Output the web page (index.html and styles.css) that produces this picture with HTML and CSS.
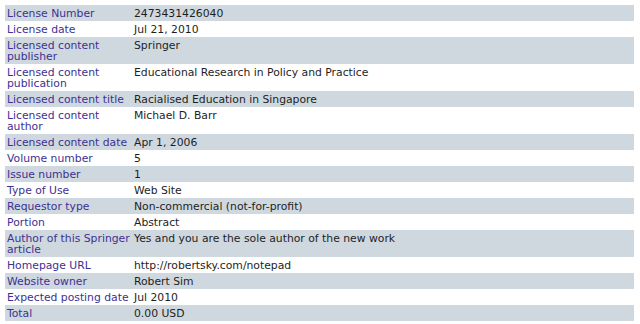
FILE: index.html
```html
<!DOCTYPE html>
<html>
<head>
<meta charset="utf-8">
<link rel="stylesheet" href="styles.css">
</head>
<body>
<div class="wrap">
<table class="details">
<tr class="alt"><td class="label">License Number</td><td class="value">2473431426040</td></tr>
<tr><td class="label">License date</td><td class="value">Jul 21, 2010</td></tr>
<tr class="alt"><td class="label">Licensed content publisher</td><td class="value">Springer</td></tr>
<tr><td class="label">Licensed content publication</td><td class="value">Educational Research in Policy and Practice</td></tr>
<tr class="alt"><td class="label">Licensed content title</td><td class="value">Racialised Education in Singapore</td></tr>
<tr><td class="label">Licensed content author</td><td class="value">Michael D. Barr</td></tr>
<tr class="alt"><td class="label">Licensed content date</td><td class="value">Apr 1, 2006</td></tr>
<tr><td class="label">Volume number</td><td class="value">5</td></tr>
<tr class="alt"><td class="label">Issue number</td><td class="value">1</td></tr>
<tr><td class="label">Type of Use</td><td class="value">Web Site</td></tr>
<tr class="alt"><td class="label">Requestor type</td><td class="value">Non-commercial (not-for-profit)</td></tr>
<tr><td class="label">Portion</td><td class="value">Abstract</td></tr>
<tr class="alt"><td class="label">Author of this Springer article</td><td class="value">Yes and you are the sole author of the new work</td></tr>
<tr><td class="label">Homepage URL</td><td class="value">http://robertsky.com/notepad</td></tr>
<tr class="alt"><td class="label">Website owner</td><td class="value">Robert Sim</td></tr>
<tr><td class="label">Expected posting date</td><td class="value">Jul 2010</td></tr>
<tr class="alt"><td class="label">Total</td><td class="value">0.00 USD</td></tr>
</table>
</div>
</body>
</html>
```

FILE: styles.css
```css
html, body {
  margin: 0;
  padding: 0;
  background: #ffffff;
}
.wrap {
  padding: 5px 6px 0 5px;
}
.details {
  width: 629px;
  border-collapse: collapse;
  font-family: "DejaVu Sans", Verdana, sans-serif;
  font-size: 10.8px;
  line-height: 11px;
}
.details td {
  padding: 3px 2px 2px 2px;
  vertical-align: top;
  text-align: left;
}
.details tr.alt td {
  background: #cfd8de;
}
.label {
  width: 123px;
  color: #3d3193;
}
.value {
  color: #1e1e1e;
  padding-left: 3px;
}
```
